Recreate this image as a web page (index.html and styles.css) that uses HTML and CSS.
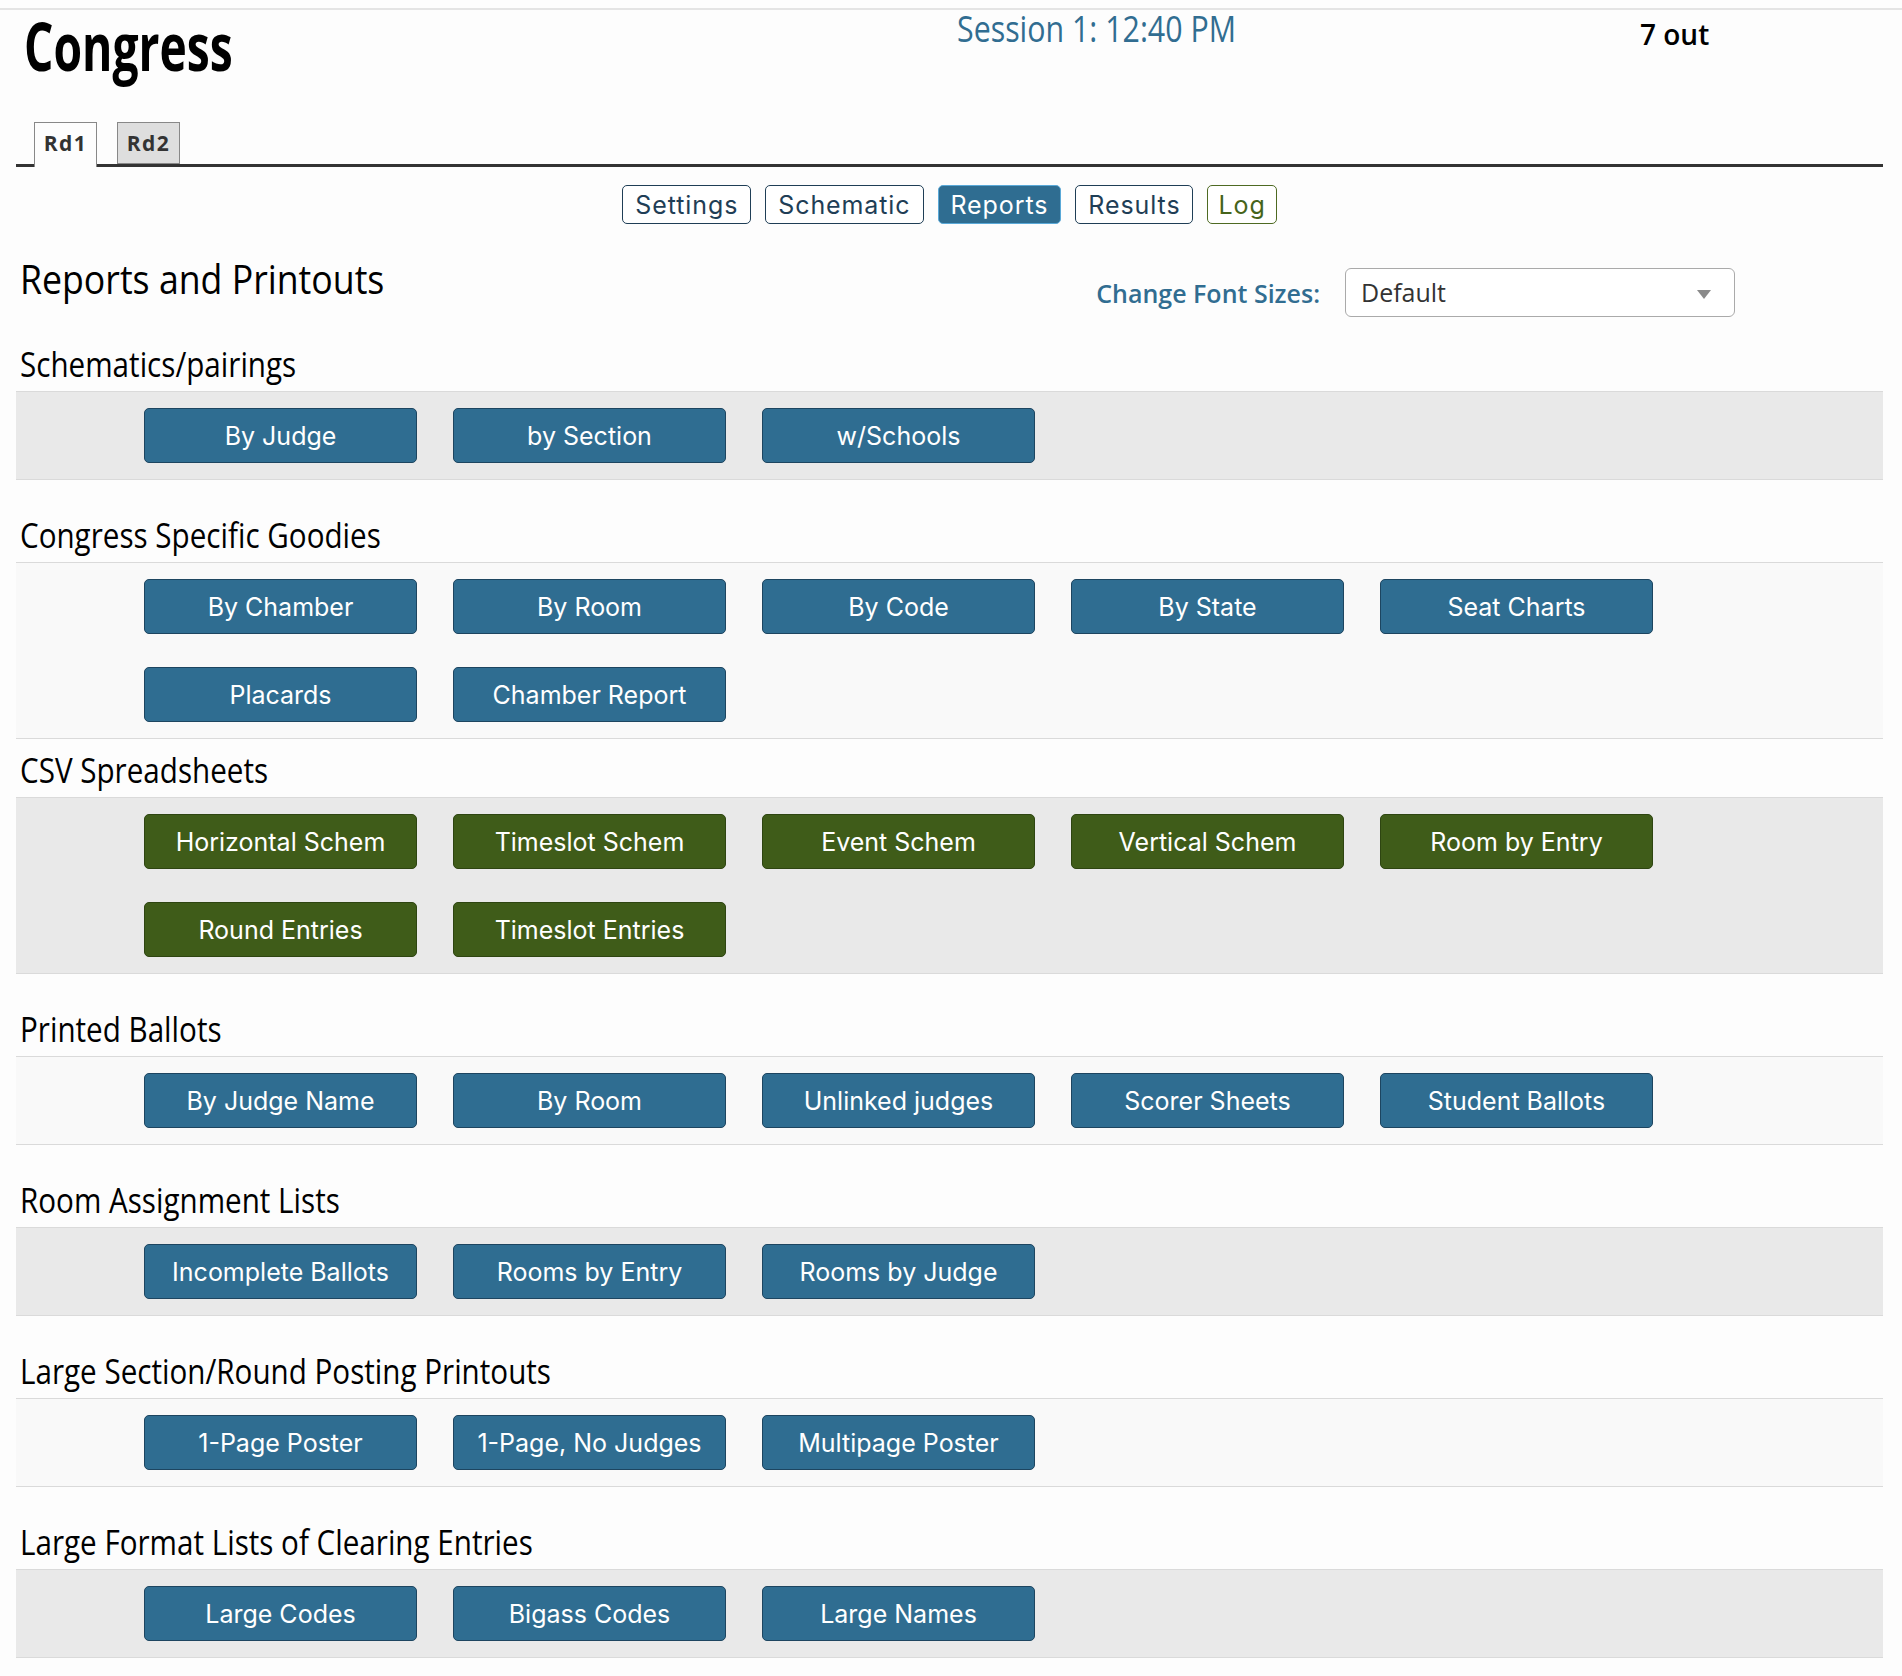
FILE: index.html
```html
<!DOCTYPE html>
<html lang="en">
<head>
<meta charset="utf-8">
<title>Congress - Reports</title>
<link rel="stylesheet" href="styles.css">
</head>
<body>
<div class="topline"></div>
<div class="page">
  <header class="masthead">
    <div class="brand"><span class="brand-text">Congress</span></div>
    <div class="session"><span class="session-text">Session 1: 12:40 PM</span></div>
    <div class="outcount">7 out</div>
  </header>

  <nav class="tabs">
    <span class="tab tab-active">Rd1</span>
    <span class="tab">Rd2</span>
  </nav>

  <div class="subnav">
    <a class="navbtn">Settings</a>
    <a class="navbtn">Schematic</a>
    <a class="navbtn navbtn-on">Reports</a>
    <a class="navbtn">Results</a>
    <a class="navbtn navbtn-green">Log</a>
  </div>

  <div class="titlerow">
    <h2 class="pagetitle"><span class="cond">Reports and Printouts</span></h2>
    <div class="fontpick">
      <span class="fontpick-label">Change Font Sizes:</span>
      <div class="fakeselect">
        <span>Default</span>
        <svg class="caret" width="14" height="9" viewBox="0 0 14 9"><path d="M0 0 L14 0 L7 9 Z" fill="#8a8a8a"/></svg>
      </div>
    </div>
  </div>

  <section class="group group-first">
    <h3 class="group-title"><span class="cond">Schematics/pairings</span></h3>
    <div class="band band-dark">
      <a class="btn">By Judge</a>
      <a class="btn">by Section</a>
      <a class="btn">w/Schools</a>
    </div>
  </section>

  <section class="group">
    <h3 class="group-title"><span class="cond">Congress Specific Goodies</span></h3>
    <div class="band band-light">
      <a class="btn">By Chamber</a>
      <a class="btn">By Room</a>
      <a class="btn">By Code</a>
      <a class="btn">By State</a>
      <a class="btn">Seat Charts</a>
      <a class="btn">Placards</a>
      <a class="btn">Chamber Report</a>
    </div>
  </section>

  <section class="group group-tight">
    <h3 class="group-title"><span class="cond">CSV Spreadsheets</span></h3>
    <div class="band band-dark">
      <a class="btn btn-green">Horizontal Schem</a>
      <a class="btn btn-green">Timeslot Schem</a>
      <a class="btn btn-green">Event Schem</a>
      <a class="btn btn-green">Vertical Schem</a>
      <a class="btn btn-green">Room by Entry</a>
      <a class="btn btn-green">Round Entries</a>
      <a class="btn btn-green">Timeslot Entries</a>
    </div>
  </section>

  <section class="group">
    <h3 class="group-title"><span class="cond">Printed Ballots</span></h3>
    <div class="band band-light">
      <a class="btn">By Judge Name</a>
      <a class="btn">By Room</a>
      <a class="btn">Unlinked judges</a>
      <a class="btn">Scorer Sheets</a>
      <a class="btn">Student Ballots</a>
    </div>
  </section>

  <section class="group">
    <h3 class="group-title"><span class="cond">Room Assignment Lists</span></h3>
    <div class="band band-dark">
      <a class="btn">Incomplete Ballots</a>
      <a class="btn">Rooms by Entry</a>
      <a class="btn">Rooms by Judge</a>
    </div>
  </section>

  <section class="group">
    <h3 class="group-title"><span class="cond">Large Section/Round Posting Printouts</span></h3>
    <div class="band band-light">
      <a class="btn">1-Page Poster</a>
      <a class="btn">1-Page, No Judges</a>
      <a class="btn">Multipage Poster</a>
    </div>
  </section>

  <section class="group">
    <h3 class="group-title"><span class="cond">Large Format Lists of Clearing Entries</span></h3>
    <div class="band band-dark">
      <a class="btn">Large Codes</a>
      <a class="btn">Bigass Codes</a>
      <a class="btn">Large Names</a>
    </div>
  </section>
</div>
</body>
</html>
```

FILE: styles.css
```css
html, body {
  margin: 0;
  padding: 0;
}

body {
  background: #fdfdfd;
  font-family: "Open Sans", "DejaVu Sans", sans-serif;
  color: #000;
}

.topline {
  margin-top: 8px;
  height: 2px;
  background: #e4e4e4;
}

.page {
  padding: 0 19px 0 16px;
}

/* ---------- masthead ---------- */
.masthead {
  display: grid;
  grid-template-columns: 941px 683px 1fr;
  align-items: start;
}

.brand {
  padding-left: 8px;
}

.brand-text {
  display: inline-block;
  font-size: 66px;
  font-weight: 700;
  line-height: 70px;
  transform: scaleX(0.7);
  transform-origin: left center;
  white-space: nowrap;
}

.session-text {
  display: inline-block;
  font-size: 37px;
  line-height: 36px;
  color: #316d91;
  transform: scaleX(0.82);
  transform-origin: left center;
  white-space: nowrap;
}

.outcount {
  font-size: 28px;
  font-weight: 600;
  line-height: 40px;
  margin-top: 4px;
  color: #000;
}

/* ---------- tabs ---------- */
.tabs {
  margin-top: 42px;
  height: 42px;
  display: flex;
  align-items: flex-end;
  gap: 20px;
  padding-left: 18px;
  border-bottom: 3px solid #333;
}

.tab {
  box-sizing: border-box;
  width: 63px;
  height: 42px;
  border: 1px solid #888;
  background: #dedede;
  color: #333;
  font-size: 21px;
  font-weight: 700;
  letter-spacing: 1.5px;
  line-height: 28px;
  padding-top: 6px;
  text-align: center;
}

.tab-active {
  height: 45px;
  margin-bottom: -3px;
  border-bottom: none;
  background: #fdfdfd;
}

/* ---------- sub navigation ---------- */
.subnav {
  margin-top: 18px;
  display: flex;
  justify-content: center;
  gap: 14px;
}

.navbtn {
  box-sizing: border-box;
  height: 39px;
  padding: 0 12px;
  display: flex;
  align-items: center;
  border: 1px solid #1f3e56;
  border-radius: 5px;
  background: #fff;
  color: #1f3e56;
  font-family: "Inter", "Noto Sans", sans-serif;
  font-size: 25px;
  letter-spacing: 0.9px;
}

.navbtn-on {
  background: #2f6d91;
  border-color: #5aa9d8;
  color: #fff;
}

.navbtn-green {
  padding: 0 10px;
  border-color: #4e6a22;
  color: #46641a;
}

/* ---------- title row ---------- */
.titlerow {
  margin-top: 30px;
  display: flex;
  justify-content: space-between;
  align-items: flex-start;
}

.pagetitle {
  margin: 0;
  padding-left: 4px;
  font-size: 41px;
  font-weight: 400;
  line-height: 48px;
}

.cond {
  display: inline-block;
  transform: scaleX(0.87);
  transform-origin: left center;
  white-space: nowrap;
}

.fontpick {
  margin-top: 14px;
  margin-right: 148px;
  display: flex;
  align-items: center;
  gap: 25px;
}

.fontpick-label {
  font-size: 25px;
  font-weight: 600;
  color: #316d91;
}

.fakeselect {
  box-sizing: border-box;
  width: 390px;
  height: 49px;
  padding: 0 23px 2px 15px;
  display: flex;
  align-items: center;
  justify-content: space-between;
  background: #fff;
  border: 1px solid #aaa;
  border-radius: 6px;
  font-size: 25px;
  color: #333;
}

.caret {
  display: block;
  margin-top: 5px;
}

/* ---------- groups ---------- */
.group {
  margin-top: 35px;
}

.group-first {
  margin-top: 27px;
}

.group-tight {
  margin-top: 11px;
}

.group-title {
  margin: 0 0 7px;
  padding-left: 4px;
  font-size: 35px;
  font-weight: 400;
  line-height: 40px;
}

.group-title .cond {
  transform: scaleX(0.846);
}

.band {
  display: flex;
  flex-wrap: wrap;
  gap: 33px 36px;
  padding: 16px 0 16px 128px;
  border-top: 1px solid #dadada;
  border-bottom: 1px solid #dadada;
}

.band-dark {
  background: #e9e9e9;
}

.band-light {
  background: #f9f9f9;
}

.btn {
  box-sizing: border-box;
  width: 273px;
  height: 55px;
  display: flex;
  align-items: center;
  justify-content: center;
  background: #2f6d91;
  border: 1px solid #1d4560;
  border-radius: 5px;
  color: #fff;
  font-family: "Inter", "Noto Sans", sans-serif;
  font-size: 25px;
  white-space: nowrap;
}

.btn-green {
  background: #3f5c19;
  border-color: #2e4511;
}
```
